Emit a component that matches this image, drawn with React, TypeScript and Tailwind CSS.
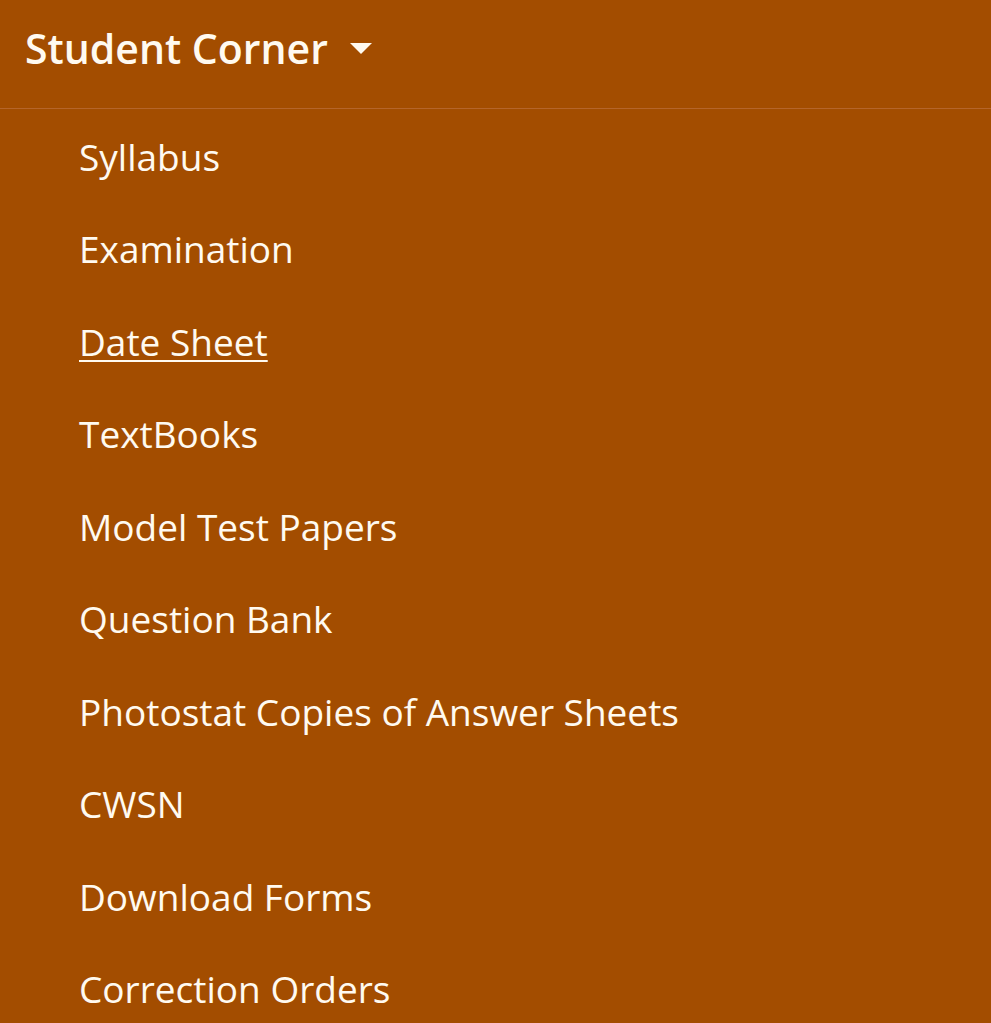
import React from "react";

const items = [
  "Syllabus",
  "Examination",
  "Date Sheet",
  "TextBooks",
  "Model Test Papers",
  "Question Bank",
  "Photostat Copies of Answer Sheets",
  "CWSN",
  "Download Forms",
  "Correction Orders",
];

export default function App() {
  return (
    <div
      className="min-h-screen w-full bg-[#a34d00] text-[#fffaf0]"
      style={{ fontFamily: '"Open Sans", "Noto Sans", sans-serif' }}
    >
      <div className="flex h-[109px] items-center border-b border-[#b5652a] pb-[12px] pl-[25px]">
        <span className="text-[41px] font-semibold leading-none">Student Corner</span>
        <svg className="ml-[22px] mt-[2px]" width="22" height="12" viewBox="0 0 22 12">
          <path d="M0 0 L22 0 L11 11 Z" fill="#fffaf0" />
        </svg>
      </div>
      <ul className="flex flex-col pl-[79px] pt-[1px]">
        {items.map((t) => (
          <li key={t} className="flex h-[92.5px] items-center">
            <a
              className={
                "text-[37px] leading-none " +
                (t === "Date Sheet" ? "underline underline-offset-[4px] decoration-2" : "")
              }
            >
              {t}
            </a>
          </li>
        ))}
      </ul>
    </div>
  );
}
